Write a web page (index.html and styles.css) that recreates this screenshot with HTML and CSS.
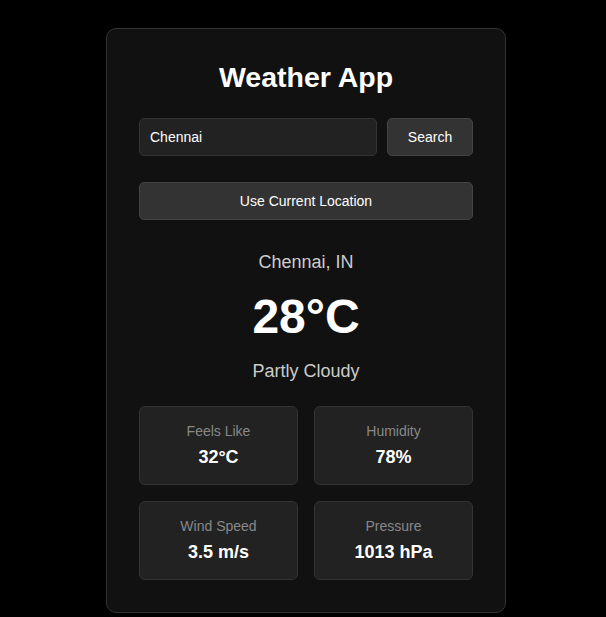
FILE: index.html
```html
<!DOCTYPE html>
<html lang="en">
<head>
<meta charset="utf-8">
<title>Weather App</title>
<link rel="stylesheet" href="styles.css">
</head>
<body>
<main class="app">
  <h1 class="title">Weather App</h1>
  <div class="search-row">
    <input class="city-input" type="text" value="Chennai">
    <button class="btn search-btn">Search</button>
  </div>
  <button class="btn location-btn">Use Current Location</button>
  <section class="current">
    <div class="place">Chennai, IN</div>
    <div class="temp">28°C</div>
    <div class="desc">Partly Cloudy</div>
  </section>
  <section class="details">
    <div class="detail"><div class="label">Feels Like</div><div class="value">32°C</div></div>
    <div class="detail"><div class="label">Humidity</div><div class="value">78%</div></div>
    <div class="detail"><div class="label">Wind Speed</div><div class="value">3.5 m/s</div></div>
    <div class="detail"><div class="label">Pressure</div><div class="value">1013 hPa</div></div>
  </section>
</main>
</body>
</html>
```
FILE: styles.css
```css
* { box-sizing: border-box; }
html, body { margin: 0; background: #000; }
body {
  font-family: "Liberation Sans", Arial, sans-serif;
  color: #fff;
  padding: 28px 0 0 106px;
}
.app {
  width: 400px;
  background: #111;
  border: 1px solid #333;
  border-radius: 10px;
  padding: 32px;
}
.title {
  margin: 0 0 25px;
  font-size: 28.5px;
  line-height: 32px;
  font-weight: bold;
  text-align: center;
  color: #fff;
}
.search-row {
  display: flex;
  gap: 10px;
}
.city-input {
  flex: 1;
  min-width: 0;
  height: 38px;
  padding: 0 10px;
  background: #222;
  border: 1px solid #333;
  border-radius: 5px;
  color: #fff;
  font-family: inherit;
  font-size: 14px;
  outline: none;
}
.btn {
  height: 38px;
  background: #333;
  border: 1px solid #444;
  border-radius: 5px;
  color: #fff;
  font-family: inherit;
  font-size: 14px;
  cursor: pointer;
}
.search-btn {
  width: 86px;
  padding: 0;
}
.location-btn {
  display: block;
  width: 100%;
  margin-top: 26px;
}
.current {
  text-align: center;
  margin-top: 32px;
}
.place {
  font-size: 18px;
  line-height: 21px;
  color: #ccc;
}
.temp {
  margin-top: 16px;
  font-size: 48px;
  line-height: 56px;
  font-weight: bold;
  color: #fff;
}
.desc {
  margin-top: 16px;
  font-size: 18px;
  line-height: 21px;
  color: #ccc;
}
.details {
  margin-top: 24px;
  display: grid;
  grid-template-columns: 1fr 1fr;
  gap: 16px;
}
.detail {
  background: #222;
  border: 1px solid #333;
  border-radius: 6px;
  padding: 16px;
  height: 79px;
  text-align: center;
}
.label {
  font-size: 14px;
  line-height: 16px;
  color: #888;
}
.value {
  margin-top: 8px;
  font-size: 18px;
  line-height: 21px;
  font-weight: bold;
  color: #fff;
}
```
